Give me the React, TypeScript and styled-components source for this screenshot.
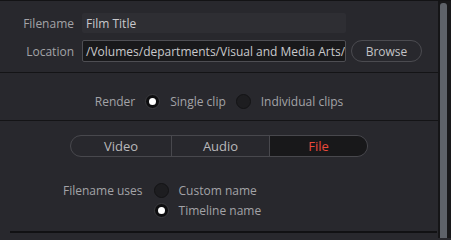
import React, { useState } from "react";
import styled, { createGlobalStyle } from "styled-components";

const Global = createGlobalStyle`
  html, body { margin: 0; padding: 0; background: #28282d; }
  body { font-family: "Open Sans", "Noto Sans", sans-serif; font-size: 12px; }
  * { box-sizing: border-box; }
`;

const Frame = styled.div`
  display: flex;
  width: 451px;
  height: 238px;
  background: #28282d;
  border-top: 1px solid #131315;
  overflow: hidden;
`;

const Main = styled.div`
  width: 438px;
  display: flex;
  flex-direction: column;
`;

const ScrollTrack = styled.div`
  width: 13px;
  display: flex;
  background: #18181a;
  border-left: 2px solid #151517;
  padding-top: 2px;
`;

const Thumb = styled.div`
  width: 7px;
  height: 100%;
  background: #5e6269;
  border-radius: 3px 3px 0 0;
`;

const Section = styled.div<{ $h: number; $pt?: number; $line?: boolean }>`
  height: ${(p) => p.$h}px;
  padding-top: ${(p) => p.$pt ?? 0}px;
  border-bottom: ${(p) => (p.$line ? "1px solid #141416" : "none")};
  display: flex;
  flex-direction: column;
`;

const FieldGrid = styled.div`
  display: grid;
  grid-template-columns: 74px 264px auto;
  column-gap: 8px;
  row-gap: 7px;
  align-items: center;
`;

const Label = styled.span`
  color: #a3a3a7;
  text-align: right;
  white-space: nowrap;
  line-height: 15px;
`;

const TextField = styled.div<{ $dark?: boolean }>`
  height: ${(p) => (p.$dark ? 22 : 20)}px;
  display: flex;
  align-items: center;
  padding-left: ${(p) => (p.$dark ? 3 : 4)}px;
  color: #c9c9cc;
  background: ${(p) => (p.$dark ? "#19191b" : "#2e2e33")};
  border: ${(p) => (p.$dark ? "1px solid #4e4e53" : "none")};
  border-radius: 2px;
  white-space: nowrap;
  overflow: hidden;
`;

const BrowseButton = styled.button`
  margin-left: -3px;
  width: 71px;
  height: 22px;
  border-radius: 11px;
  border: 1px solid #4b4b50;
  background: transparent;
  color: #c3c3c6;
  font-family: inherit;
  font-size: 12px;
  padding: 0;
`;

const CenterRow = styled.div`
  margin-top: 21px;
  display: flex;
  align-items: center;
  justify-content: center;
  gap: 10px;
`;

const RadioOption = styled.label`
  display: flex;
  align-items: center;
  gap: 10px;
  height: 15px;
  line-height: 15px;
  color: #a3a3a7;
  white-space: nowrap;
`;

const RadioDot = styled.span<{ $on?: boolean }>`
  width: 15px;
  height: 15px;
  border-radius: 50%;
  flex: none;
  display: flex;
  align-items: center;
  justify-content: center;
  background: ${(p) => (p.$on ? "#0e0e10" : "#1d1d20")};
  border: 1px solid ${(p) => (p.$on ? "#3c3c40" : "#131315")};
  &::after {
    content: "";
    display: ${(p) => (p.$on ? "block" : "none")};
    width: 7px;
    height: 7px;
    border-radius: 50%;
    background: #ffffff;
  }
`;

const Tabs = styled.div`
  align-self: center;
  margin-top: 14px;
  width: 298px;
  height: 22px;
  display: grid;
  grid-template-columns: 100px 98px 1fr;
  border: 1px solid #48484d;
  border-radius: 11px;
  overflow: hidden;
`;

const Tab = styled.div<{ $active?: boolean }>`
  display: flex;
  align-items: center;
  justify-content: center;
  font-size: 13px;
  color: ${(p) => (p.$active ? "#e8493a" : "#b8b8bb")};
  background: ${(p) => (p.$active ? "#18181a" : "transparent")};
  & + & {
    border-left: 1px solid #48484d;
  }
`;

const UsesGrid = styled.div`
  margin-top: 26px;
  margin-left: 63px;
  display: grid;
  grid-template-columns: auto auto;
  column-gap: 11px;
  row-gap: 5px;
  justify-content: start;
  align-items: center;
`;

const BottomLine = styled.div`
  margin: auto 1px 4px 10px;
  border-bottom: 2px solid #111113;
`;

export default function App() {
  const [render, setRender] = useState("single");
  const [uses, setUses] = useState("timeline");
  return (
    <>
      <Global />
      <Frame>
        <Main>
          <Section $h={72} $pt={12} $line>
            <FieldGrid>
              <Label>Filename</Label>
              <TextField>Film Title</TextField>
              <span />
              <Label>Location</Label>
              <TextField $dark>/Volumes/departments/Visual and Media Arts/</TextField>
              <BrowseButton>Browse</BrowseButton>
            </FieldGrid>
          </Section>
          <Section $h={48} $line>
            <CenterRow>
              <Label>Render</Label>
              <RadioOption onClick={() => setRender("single")}>
                <RadioDot $on={render === "single"} />
                Single clip
              </RadioOption>
              <RadioOption onClick={() => setRender("individual")}>
                <RadioDot $on={render === "individual"} />
                Individual clips
              </RadioOption>
            </CenterRow>
          </Section>
          <Section $h={116}>
            <Tabs>
              <Tab>Video</Tab>
              <Tab>Audio</Tab>
              <Tab $active>File</Tab>
            </Tabs>
            <UsesGrid>
              <Label>Filename uses</Label>
              <RadioOption onClick={() => setUses("custom")}>
                <RadioDot $on={uses === "custom"} />
                Custom name
              </RadioOption>
              <span />
              <RadioOption onClick={() => setUses("timeline")}>
                <RadioDot $on={uses === "timeline"} />
                Timeline name
              </RadioOption>
            </UsesGrid>
            <BottomLine />
          </Section>
        </Main>
        <ScrollTrack>
          <Thumb />
        </ScrollTrack>
      </Frame>
    </>
  );
}
